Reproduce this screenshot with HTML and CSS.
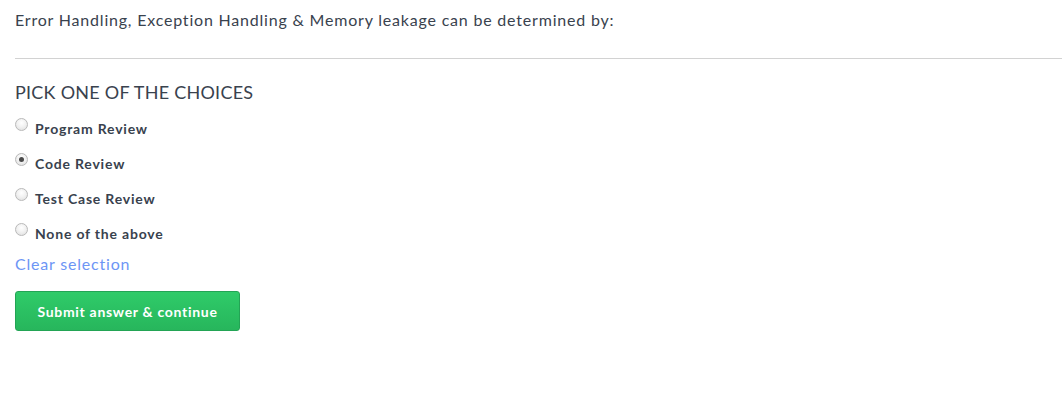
FILE: index.html
```html
<!DOCTYPE html>
<html>
<head>
<meta charset="utf-8">
<link rel="stylesheet" href="styles.css">
</head>
<body>
<div class="page">
  <p class="question">Error Handling, Exception Handling &amp; Memory leakage can be determined by:</p>
  <hr class="divider">
  <h3 class="heading">PICK ONE OF THE CHOICES</h3>
  <div class="choices">
    <label class="choice"><input type="radio" name="c" class="radio"><span>Program Review</span></label>
    <label class="choice"><input type="radio" name="c" class="radio" checked><span>Code Review</span></label>
    <label class="choice"><input type="radio" name="c" class="radio"><span>Test Case Review</span></label>
    <label class="choice"><input type="radio" name="c" class="radio"><span>None of the above</span></label>
  </div>
  <a class="clear" href="#">Clear selection</a>
  <button class="submit">Submit answer &amp; continue</button>
</div>
</body>
</html>
```
FILE: styles.css
```css
html, body {
  margin: 0;
  padding: 0;
  background: #fff;
}
body {
  font-family: Lato, "Open Sans", sans-serif;
  color: #39424e;
}
.page {
  padding: 0 0 0 15px;
  display: flex;
  flex-direction: column;
  align-items: flex-start;
}
.question {
  margin: 10px 0 0 0;
  font-size: 16px;
  line-height: 20px;
  letter-spacing: 0.8px;
  color: #39424e;
}
.divider {
  align-self: stretch;
  margin: 28px 0 0 0;
  border: 0;
  border-top: 1px solid #d2d2d2;
  height: 0;
}
.heading {
  margin: 22px 0 0 0;
  font-size: 18px;
  line-height: 22px;
  font-weight: 400;
  letter-spacing: 0.25px;
  color: #39424e;
}
.choices {
  display: flex;
  flex-direction: column;
  margin-top: 7px;
}
.choice {
  display: flex;
  align-items: flex-start;
  height: 35px;
  font-size: 14px;
  font-weight: 700;
  line-height: 20px;
  letter-spacing: 0.8px;
  color: #39424e;
}
.choice span {
  margin-top: 9px;
  margin-left: 7px;
}
.radio {
  appearance: none;
  -webkit-appearance: none;
  margin: 8px 0 0 0;
  width: 13px;
  height: 13px;
  border-radius: 50%;
  border: 1px solid #b9b9b9;
  background: radial-gradient(circle at 50% 35%, #ffffff 0%, #f2f2f2 45%, #dcdcdc 100%);
  box-sizing: border-box;
  position: relative;
}
.radio:checked::after {
  content: "";
  position: absolute;
  left: 3px;
  top: 3px;
  width: 5px;
  height: 5px;
  border-radius: 50%;
  background: #4a4a4a;
}
.clear {
  margin-top: 4px;
  font-size: 16px;
  line-height: 20px;
  letter-spacing: 0.8px;
  color: #6d95f5;
  text-decoration: none;
}
.submit {
  margin-top: 17px;
  width: 225px;
  height: 40px;
  border: 1px solid #23a455;
  border-radius: 3px;
  background: linear-gradient(#2fcb69, #27b65c);
  color: #fff;
  font-family: Lato, "Open Sans", sans-serif;
  font-size: 14px;
  font-weight: 700;
  letter-spacing: 0.7px;
  padding: 0;
}
```
